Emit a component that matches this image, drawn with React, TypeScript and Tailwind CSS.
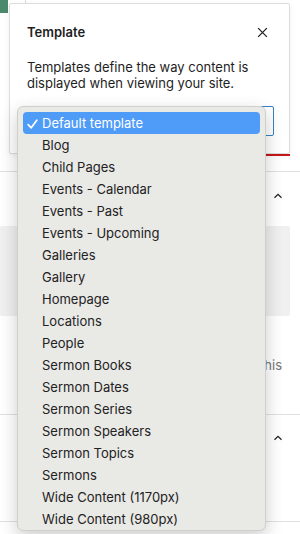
import React from 'react'

const templates = [
  'Default template',
  'Blog',
  'Child Pages',
  'Events - Calendar',
  'Events - Past',
  'Events - Upcoming',
  'Galleries',
  'Gallery',
  'Homepage',
  'Locations',
  'People',
  'Sermon Books',
  'Sermon Dates',
  'Sermon Series',
  'Sermon Speakers',
  'Sermon Topics',
  'Sermons',
  'Wide Content (1170px)',
  'Wide Content (980px)',
]

function ChevronUp() {
  return (
    <svg width="14" height="14" viewBox="0 0 24 24" fill="none" stroke="#1e1e1e" strokeWidth="2">
      <path d="M6 15l6-6 6 6" />
    </svg>
  )
}

function CloseIcon() {
  return (
    <svg width="15" height="15" viewBox="0 0 24 24" fill="none" stroke="#1e1e1e" strokeWidth="2">
      <path d="M5 5l14 14M19 5L5 19" />
    </svg>
  )
}

function Check() {
  return (
    <svg width="11" height="10" viewBox="0 0 11 10" fill="none" stroke="#ffffff" strokeWidth="1.7" strokeLinecap="round" strokeLinejoin="round">
      <path d="M1.2 5.6l3 3.2L9.8 1.2" />
    </svg>
  )
}

export default function App() {
  return (
    <div
      className="relative w-[300px] h-[534px] overflow-hidden bg-white text-[#1e1e1e]"
      style={{ fontFamily: 'Inter, "Noto Sans", sans-serif' }}
    >
      {/* sidebar behind the popover */}
      <div className="flex flex-col">
        <div className="h-[172px] border-b border-[#e0e0e0] flex flex-col">
          <div className="flex h-[20px]">
            <div className="w-[8px] h-[13px] bg-[#4a8a6c]" />
            <div className="ml-[17px] w-px h-[20px] bg-[#dddddd]" />
          </div>
          <div className="mt-[134px] ml-[200px] w-[90px] h-[1.5px] bg-[#cc1818]" />
        </div>
        <div className="h-[243px] border-b border-[#e0e0e0] flex flex-col pr-[10px]">
          <div className="flex justify-end h-[48px] items-center pr-[5px]">
            <ChevronUp />
          </div>
          <div className="mt-[6px] h-[90px] bg-[#f0f0f0] rounded-[2px]" />
          <div className="mt-[41px] text-right pr-[8px] text-[13px] leading-[16px] text-[#757575]">this</div>
        </div>
        <div className="h-[107px] border-b border-[#e0e0e0] flex flex-col pr-[10px]">
          <div className="flex justify-end h-[46px] items-center pr-[5px]">
            <ChevronUp />
          </div>
        </div>
      </div>

      {/* template popover */}
      <div className="absolute left-[9px] top-[3px] w-[281px] h-[151px] bg-white border border-[#dcdcde] rounded-[2px] shadow-[0_2px_6px_rgba(0,0,0,0.06)] px-[17px] pt-[20px]">
        <div className="flex items-center justify-between h-[16px]">
          <span className="text-[13px] font-semibold leading-[16px]">Template</span>
          <span className="mr-[2px] flex">
            <CloseIcon />
          </span>
        </div>
        <p className="mt-[20px] text-[13px] leading-[15.5px]">
          Templates define the way content is displayed when viewing your site.
        </p>
        <div className="mt-[15px] w-[247px] h-[30px] border border-[#3582c4] rounded-[2px]" />
      </div>

      {/* native select menu */}
      <div className="absolute left-[17px] top-[106px] w-[249px] h-[425px] bg-[#e9e9e6] border border-[#cfcfcc] rounded-[6px] shadow-[0_6px_18px_rgba(0,0,0,0.2)] px-[5px] pt-[5px]">
        {templates.map((t, i) => (
          <div
            key={t}
            className={
              i === 0
                ? 'flex items-center h-[22px] rounded-[4px] bg-[#4f9bf8] text-white text-[13px]'
                : 'flex items-center h-[22px] text-[#222222] text-[13px]'
            }
          >
            <span className="w-[19px] pl-[4px] pt-[1px] flex">{i === 0 ? <Check /> : null}</span>
            <span className="pt-[2px]">{t}</span>
          </div>
        ))}
      </div>
    </div>
  )
}
